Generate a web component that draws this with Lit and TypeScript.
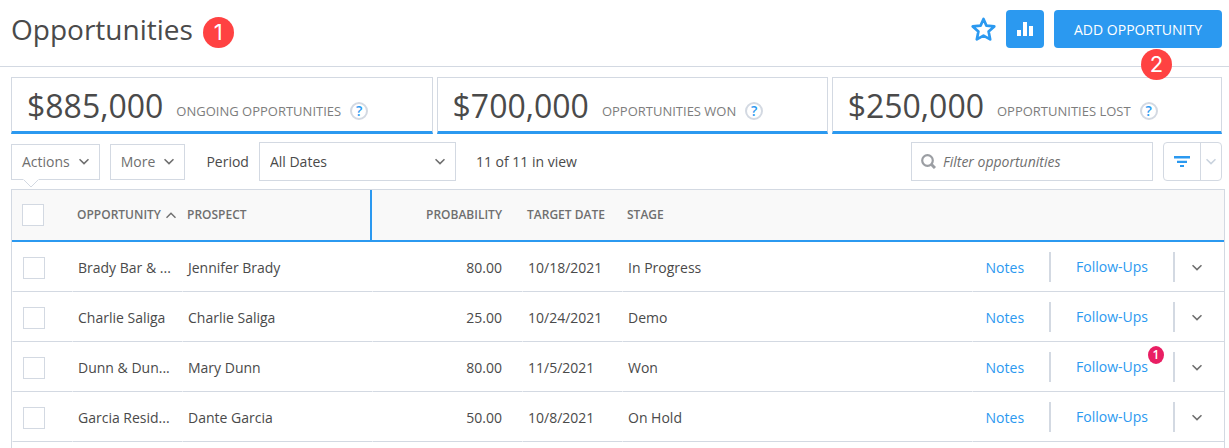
import { LitElement, html, css, svg } from "lit";
import { customElement, property, state } from "lit/decorators.js";

interface Stat {
  amount: string;
  label: string;
}

interface Opportunity {
  name: string;
  prospect: string;
  probability: string;
  target: string;
  stage: string;
  followUps: number;
}

const STATS: Stat[] = [
  { amount: "$885,000", label: "Ongoing opportunities" },
  { amount: "$700,000", label: "Opportunities won" },
  { amount: "$250,000", label: "Opportunities lost" },
];

const ROWS: Opportunity[] = [
  { name: "Brady Bar & ...", prospect: "Jennifer Brady", probability: "80.00", target: "10/18/2021", stage: "In Progress", followUps: 0 },
  { name: "Charlie Saliga", prospect: "Charlie Saliga", probability: "25.00", target: "10/24/2021", stage: "Demo", followUps: 0 },
  { name: "Dunn & Dun...", prospect: "Mary Dunn", probability: "80.00", target: "11/5/2021", stage: "Won", followUps: 1 },
  { name: "Garcia Resid...", prospect: "Dante Garcia", probability: "50.00", target: "10/8/2021", stage: "On Hold", followUps: 0 },
];

const chevron = (up = false) => html`
  <svg class="chevron" width="10" height="7" viewBox="0 0 10 7" aria-hidden="true">
    ${up
      ? svg`<path d="M.5 5.8 5 1.2 9.5 5.8" fill="none" stroke="currentColor" stroke-width="1.4" />`
      : svg`<path d="M.5 1.2 5 5.6 9.5 1.2" fill="none" stroke="currentColor" stroke-width="1.6" />`}
  </svg>
`;

const shared = css`
  * {
    box-sizing: border-box;
  }
  button {
    font: inherit;
    color: inherit;
    margin: 0;
    padding: 0;
    border: 0;
    background: none;
    cursor: pointer;
  }
  svg {
    display: block;
    flex: none;
  }
`;

@customElement("stat-card")
class StatCard extends LitElement {
  static styles = [
    shared,
    css`
      :host {
        display: flex;
        align-items: flex-end;
        box-sizing: border-box;
        height: 57px;
        padding: 0 16px 1px 15px;
        border: 1px solid #d3d9e2;
        border-bottom: 3px solid #2b99f0;
        white-space: nowrap;
      }
      .amount {
        font-size: 32px;
        line-height: 48px;
        color: #4a4a4a;
      }
      .label {
        margin: 0 0 9px 13px;
        font-size: 13px;
        line-height: 20px;
        text-transform: uppercase;
        color: #7d7d7d;
      }
      .help {
        width: 18px;
        height: 18px;
        margin: 0 0 10px 9px;
        border: 2px solid #d3d9e2;
        border-radius: 50%;
        font-size: 14px;
        font-weight: 600;
        line-height: 14px;
        text-align: center;
        color: #2b99f0;
      }
    `,
  ];

  @property() amount = "";
  @property() label = "";

  render() {
    return html`
      <span class="amount">${this.amount}</span>
      <span class="label">${this.label}</span>
      <button class="help" type="button" aria-label="Help">?</button>
    `;
  }
}

@customElement("app-root")
class AppRoot extends LitElement {
  static styles = [
    shared,
    css`
      :host {
        display: flex;
        flex-direction: column;
        height: 100vh;
        overflow: hidden;
        background: #fff;
        color: #4a4a4a;
        font-family: "Open Sans", "Noto Sans", sans-serif;
        font-size: 14px;
        line-height: 20px;
      }
      .header {
        display: flex;
        align-items: center;
        gap: 10px;
        height: 67px;
        padding: 0 7px 8px 11px;
        border-bottom: 1px solid #d3d9e2;
      }
      .title {
        margin: 0;
        font-size: 28px;
        font-weight: 400;
        line-height: 40px;
      }
      .callout {
        display: flex;
        align-items: center;
        justify-content: center;
        width: 31px;
        height: 31px;
        border-radius: 50%;
        background: #ff4242;
        color: #fff;
        font-family: Inter, sans-serif;
        font-size: 22px;
        line-height: 31px;
      }
      .titlemark {
        margin-top: 6px;
      }
      .tools {
        display: flex;
        align-items: center;
        gap: 10px;
        margin-left: auto;
      }
      .star {
        color: #2b99f0;
      }
      .chart {
        display: grid;
        place-items: center;
        width: 38px;
        height: 38px;
        border-radius: 4px;
        background: #2b99f0;
        color: #fff;
      }
      .add {
        position: relative;
      }
      .primary {
        height: 38px;
        padding: 2px 20px 0;
        border-radius: 4px;
        background: #2b99f0;
        color: #fff;
        font-size: 14px;
        text-transform: uppercase;
      }
      .addmark {
        position: absolute;
        top: 39px;
        right: 50px;
      }
      .stats {
        display: flex;
        gap: 4px;
        padding: 10px 7px 0 11px;
      }
      .stats > * {
        flex: 1 1 auto;
      }
      .toolbar {
        display: flex;
        align-items: center;
        gap: 10px;
        height: 55px;
        padding: 0 7px 0 11px;
      }
      .menu {
        position: relative;
        display: flex;
        align-items: center;
        gap: 9px;
        height: 36px;
        padding: 0 10px;
        border: 1px solid #d3d9e2;
        color: #6f6f6f;
      }
      .notch {
        position: absolute;
        left: 11px;
        top: 34px;
      }
      .period {
        margin-left: 11px;
      }
      .select {
        display: grid;
        align-items: center;
        width: 197px;
      }
      .select > * {
        grid-area: 1 / 1;
      }
      .select .chevron {
        justify-self: end;
        margin-right: 11px;
        pointer-events: none;
        color: #6f6f6f;
      }
      .select select {
        appearance: none;
        width: 100%;
        height: 39px;
        padding: 0 30px 0 10px;
        border: 1px solid #d3d9e2;
        border-radius: 0;
        background: #fff;
        color: inherit;
        font: inherit;
      }
      .count {
        margin-left: 10px;
      }
      .search {
        display: flex;
        align-items: center;
        gap: 7px;
        width: 242px;
        height: 39px;
        margin-left: auto;
        padding: 0 9px;
        border: 1px solid #d3d9e2;
        color: #9b9ea3;
      }
      .search input {
        flex: 1;
        min-width: 0;
        padding: 0;
        border: 0;
        outline: 0;
        background: none;
        color: #4a4a4a;
        font: inherit;
      }
      .search input::placeholder {
        color: #6f6f6f;
        font-style: italic;
        opacity: 1;
      }
      .split {
        display: flex;
        height: 39px;
        border: 1px solid #d3d9e2;
        border-radius: 4px;
      }
      .filter {
        display: grid;
        place-items: center;
        width: 37px;
        border-right: 1px solid #d3d9e2;
        color: #2b99f0;
      }
      .more {
        display: grid;
        place-items: center;
        width: 20px;
        color: #c9d3de;
      }
      .grid {
        flex: 1;
        min-height: 0;
        margin: 0 4px 0 11px;
        overflow: hidden;
        border: 1px solid #d3d9e2;
        border-bottom: 0;
      }
      table {
        width: 100%;
        table-layout: fixed;
        border-spacing: 0;
      }
      .c-check {
        width: 60px;
      }
      .c-name {
        width: 110px;
      }
      .c-prospect {
        width: 190px;
      }
      .c-prob {
        width: 150px;
      }
      .c-date {
        width: 100px;
      }
      .c-actions {
        width: 252px;
      }
      th {
        height: 52px;
        padding: 0 5px;
        border-bottom: 2px solid #2b99f0;
        background: #f9f9f9;
        color: #6f6f6f;
        font-size: 12px;
        font-weight: 600;
        text-align: left;
        text-transform: uppercase;
        white-space: nowrap;
      }
      td {
        height: 50px;
        padding: 2px 10px 0 5px;
        overflow: hidden;
        border-bottom: 1px solid #d3d9e2;
        border-left: 1px solid #fff;
        text-overflow: ellipsis;
        white-space: nowrap;
      }
      th.check {
        padding: 0 10px;
      }
      td.check {
        padding: 2px 10px 0;
      }
      th.pinned {
        border-right: 2px solid #2b99f0;
      }
      th.number,
      td.number {
        padding-right: 20px;
        text-align: right;
      }
      td.actions {
        padding: 0;
      }
      .sort {
        display: flex;
        align-items: center;
        gap: 5px;
        font-weight: 600;
        text-transform: uppercase;
      }
      .box {
        display: block;
        appearance: none;
        width: 22px;
        height: 22px;
        margin: 0;
        border: 1px solid #d3d9e2;
        background: #fff;
      }
      .box:checked {
        background: #2b99f0;
      }
      .links {
        display: flex;
        align-items: center;
        justify-content: flex-end;
        height: 30px;
      }
      .links a {
        position: relative;
        color: #2b99f0;
        text-decoration: none;
      }
      .notes {
        margin-right: 25px;
        padding-top: 2px;
      }
      .follow {
        margin: 0 25px;
      }
      .divide {
        width: 2px;
        height: 30px;
        background: #d3d9e2;
      }
      .rowmenu {
        display: grid;
        place-items: center;
        width: 10px;
        margin: 0 22px 0 17px;
        padding-top: 2px;
        color: #6f6f6f;
      }
      .badge {
        position: absolute;
        top: -11px;
        right: -16px;
        width: 16px;
        height: 18px;
        border-radius: 50%;
        background: #e91e63;
        color: #fff;
        font-size: 12px;
        font-weight: 600;
        line-height: 18px;
        text-align: center;
      }
    `,
  ];

  @state() private query = "";

  render() {
    return html`
      <header class="header">
        <h1 class="title">Opportunities</h1>
        <span class="callout titlemark">1</span>
        <div class="tools">
          <button class="star" type="button" aria-label="Favorite">
            <svg width="26" height="26" viewBox="0 0 26 26">
              <path
                d="M13.5 3 16.4 9.6 24.3 10.4 18.6 15.6 20.2 23.4 13.5 19.6 6.8 23.4 8.4 15.6 2.7 10.4 10.6 9.6Z"
                fill="none" stroke="currentColor" stroke-width="2.7" stroke-linejoin="round"
              />
            </svg>
          </button>
          <button class="chart" type="button" aria-label="Charts">
            <svg width="16" height="14" viewBox="0 0 16 14">
              <path d="M0 8h4v6H0zM6 0h4v14H6zM12 4h4v10h-4z" fill="currentColor" />
            </svg>
          </button>
          <div class="add">
            <button class="primary" type="button">Add opportunity</button>
            <span class="callout addmark">2</span>
          </div>
        </div>
      </header>

      <section class="stats">
        ${STATS.map((s) => html`<stat-card .amount=${s.amount} .label=${s.label}></stat-card>`)}
      </section>

      <div class="toolbar">
        <button class="menu" type="button">
          Actions ${chevron()}
          <svg class="notch" width="16" height="9" viewBox="0 0 16 9" aria-hidden="true">
            <path d="M0 0h16v1L8 8.5 0 1z" fill="#fff" />
            <path d="M.5 .5 8 8 15.5 .5" fill="none" stroke="#d3d9e2" />
          </svg>
        </button>
        <button class="menu" type="button">More ${chevron()}</button>
        <label class="period" for="period">Period</label>
        <span class="select">
          <select id="period">
            <option>All Dates</option>
          </select>
          ${chevron()}
        </span>
        <span class="count">11 of 11 in view</span>
        <div class="search">
          <svg width="15" height="15" viewBox="0 0 15 15" aria-hidden="true">
            <circle cx="6.5" cy="6.5" r="5.3" fill="none" stroke="currentColor" stroke-width="2.2" />
            <path d="M10 10 14 14" stroke="currentColor" stroke-width="3" />
          </svg>
          <input
            type="text"
            aria-label="Filter opportunities"
            placeholder="Filter opportunities"
            .value=${this.query}
            @input=${(e: Event) => (this.query = (e.target as HTMLInputElement).value)}
          />
        </div>
        <div class="split">
          <button class="filter" type="button" aria-label="Filter">
            <svg width="16" height="11" viewBox="0 0 16 11">
              <path d="M0 0h16v2.5H0zM3 4.7h10v2.3H3zM6 9h4v2H6z" fill="currentColor" />
            </svg>
          </button>
          <button class="more" type="button" aria-label="Filter options">${chevron()}</button>
        </div>
      </div>

      <div class="grid">
        <table>
          <colgroup>
            <col class="c-check" />
            <col class="c-name" />
            <col class="c-prospect" />
            <col class="c-prob" />
            <col class="c-date" />
            <col />
            <col class="c-actions" />
          </colgroup>
          <thead>
            <tr>
              <th class="check"><input class="box" type="checkbox" aria-label="Select all" /></th>
              <th><button class="sort" type="button">Opportunity ${chevron(true)}</button></th>
              <th class="pinned">Prospect</th>
              <th class="number">Probability</th>
              <th>Target date</th>
              <th>Stage</th>
              <th></th>
            </tr>
          </thead>
          <tbody>
            ${ROWS.map(
              (r) => html`
                <tr>
                  <td class="check"><input class="box" type="checkbox" aria-label="Select ${r.name}" /></td>
                  <td>${r.name}</td>
                  <td>${r.prospect}</td>
                  <td class="number">${r.probability}</td>
                  <td>${r.target}</td>
                  <td>${r.stage}</td>
                  <td class="actions">
                    <div class="links">
                      <a class="notes" href="#notes">Notes</a>
                      <span class="divide"></span>
                      <a class="follow" href="#follow-ups"
                        >Follow-Ups${r.followUps ? html`<span class="badge">${r.followUps}</span>` : ""}</a
                      >
                      <span class="divide"></span>
                      <button class="rowmenu" type="button" aria-label="Row actions">${chevron()}</button>
                    </div>
                  </td>
                </tr>
              `
            )}
          </tbody>
        </table>
      </div>
    `;
  }
}
